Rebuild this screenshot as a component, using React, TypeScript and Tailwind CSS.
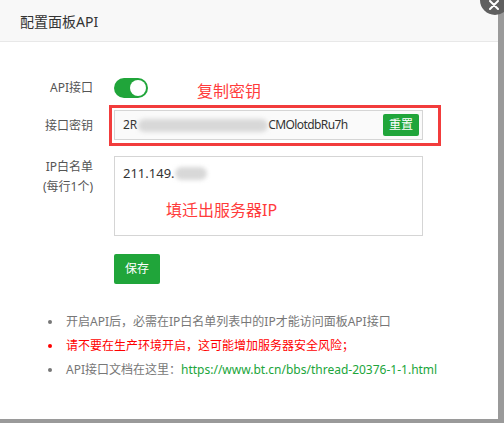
import React from 'react';

const font = "font-['Noto_Sans','Noto_Sans_CJK_SC',sans-serif]";

const Blur: React.FC<{ w: number; dark?: boolean }> = ({ w, dark }) => (
  <span
    className={`inline-block h-[13px] align-middle rounded-full blur-[2px] ${dark ? 'bg-[#c8c8c8]' : 'bg-[#d8d8d8]'}`}
    style={{ width: w }}
  />
);

export default function App() {
  return (
    <div className={`relative w-[504px] h-[423px] overflow-hidden bg-[#9a9a9a] ${font}`}>
      <div className="w-[498px] h-[419px] bg-white flex flex-col">
        {/* Header */}
        <div className="h-[42px] bg-[#f8f8f8] border-b border-[#e8e8e8] flex items-center pt-[2px] px-[20px] text-[14px] text-[#333]">
          配置面板API
        </div>

        {/* Form */}
        <div className="flex flex-col pt-[36px] text-[12px] text-[#555]">
          {/* API switch */}
          <div className="flex items-center h-[20px]">
            <div className="w-[93px] text-right">API接口</div>
            <div className="pl-[21px] flex items-center">
              <div className="w-[34px] h-[20px] rounded-full bg-[#20a53a] flex items-center justify-end pr-[2px]">
                <div className="w-[16px] h-[16px] rounded-full bg-white" />
              </div>
              <span className="ml-[49px] mt-[6px] text-[16px] text-[#ff3b3b]">复制密钥</span>
            </div>
          </div>

          {/* Key */}
          <div className="flex items-center mt-[7px]">
            <div className="w-[93px] text-right">接口密钥</div>
            <div className="ml-[16px] border-[3px] border-[#f23c3c] pt-[2px] pb-[3px] pl-[2px] pr-[15px]">
              <div className="w-[309px] h-[30px] border border-[#d5d5d5] bg-[#fafafa] flex items-center pl-[8px] pr-[3px] text-[12px] text-[#333]">
                <span>2R</span>
                <span className="ml-[1px]"><Blur w={130} /></span>
                <span className="tracking-[-0.6px]">CMOlotdbRu7h</span>
                <button className="ml-auto w-[36px] h-[22px] rounded-[2px] bg-[#20a53a] text-white text-[12px] flex items-center justify-center">
                  重置
                </button>
              </div>
            </div>
          </div>

          {/* IP whitelist */}
          <div className="flex items-start mt-[10px]">
            <div className="w-[93px] text-right leading-[20px] pt-[1px]">
              IP白名单
              <br />
              (每行1个)
            </div>
            <div className="ml-[21px] w-[309px] h-[80px] border border-[#d5d5d5] px-[8px] pt-[6px] text-[13px] text-[#333]">
              <div className="leading-[20px] flex items-center">
                <span>211.149.</span>
                <Blur w={32} />
              </div>
              <div className="ml-[43px] mt-[15px] text-[16px] text-[#ff3b3b]">填迁出服务器IP</div>
            </div>
          </div>

          {/* Save */}
          <div className="pl-[114px] mt-[18px]">
            <button className="w-[46px] h-[30px] rounded-[2px] bg-[#20a53a] text-white text-[12px]">保存</button>
          </div>

          {/* Notes */}
          <ul className="mt-[26px] pl-[48px] text-[12px] leading-[24px]">
            <li className="flex items-center text-[#777]">
              <span className="w-[4px] h-[4px] rounded-full bg-[#777] mr-[14px]" />
              开启API后，必需在IP白名单列表中的IP才能访问面板API接口
            </li>
            <li className="flex items-center text-[#ff0000]">
              <span className="w-[4px] h-[4px] rounded-full bg-[#ff0000] mr-[14px]" />
              请不要在生产环境开启，这可能增加服务器安全风险；
            </li>
            <li className="flex items-center text-[#777]">
              <span className="w-[4px] h-[4px] rounded-full bg-[#777] mr-[14px]" />
              API接口文档在这里：
              <a className="text-[#20a53a]">https://www.bt.cn/bbs/thread-20376-1-1.html</a>
            </li>
          </ul>
        </div>
      </div>

      {/* Close button */}
      <div className="absolute left-[480px] top-[-15px] w-[30px] h-[30px] rounded-full bg-[#5f5f5f] flex items-end justify-center pb-[5px] pr-[2px]">
        <svg width="10" height="10" viewBox="0 0 10 10">
          <path d="M1 1L9 9M9 1L1 9" stroke="white" strokeWidth="2" strokeLinecap="round" />
        </svg>
      </div>
    </div>
  );
}
